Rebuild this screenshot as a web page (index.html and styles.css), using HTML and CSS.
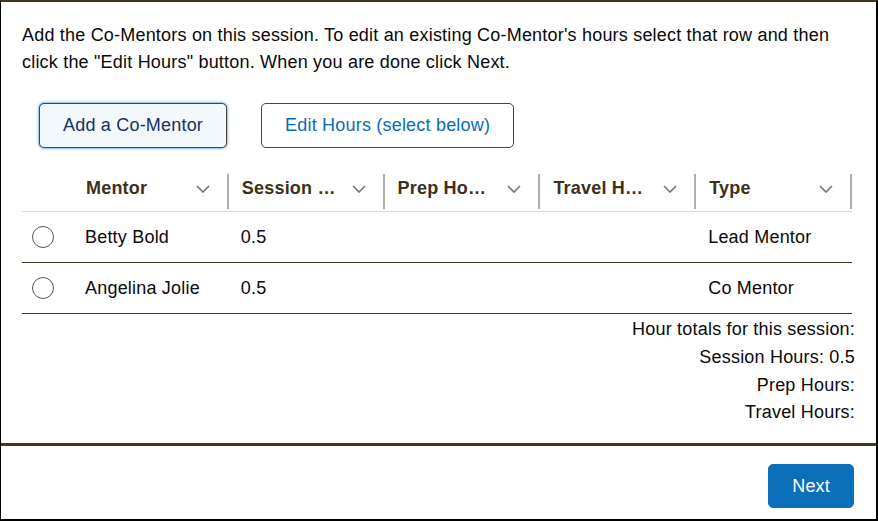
FILE: index.html
```html
<!DOCTYPE html>
<html lang="en">
<head>
<meta charset="utf-8">
<title>Co-Mentors</title>
<link rel="stylesheet" href="styles.css">
</head>
<body>
<div class="frame">
  <section class="panel">
    <p class="intro">Add the Co-Mentors on this session. To edit an existing Co-Mentor's hours select that row and then click the "Edit Hours" button. When you are done click Next.</p>
    <div class="actions">
      <button class="btn btn-focus" type="button">Add a Co-Mentor</button>
      <button class="btn btn-neutral" type="button">Edit Hours (select below)</button>
    </div>
    <div class="grid">
      <div class="row head">
        <div class="cell sel"></div>
        <div class="th"><div class="th-in"><span class="lbl">Mentor</span><svg class="chev" viewBox="0 0 14 8" width="14" height="8"><path d="M1 1 L7 7 L13 1" /></svg></div></div>
        <div class="th"><div class="th-in"><span class="lbl">Session …</span><svg class="chev" viewBox="0 0 14 8" width="14" height="8"><path d="M1 1 L7 7 L13 1" /></svg></div></div>
        <div class="th"><div class="th-in"><span class="lbl">Prep Ho…</span><svg class="chev" viewBox="0 0 14 8" width="14" height="8"><path d="M1 1 L7 7 L13 1" /></svg></div></div>
        <div class="th"><div class="th-in"><span class="lbl">Travel H…</span><svg class="chev" viewBox="0 0 14 8" width="14" height="8"><path d="M1 1 L7 7 L13 1" /></svg></div></div>
        <div class="th"><div class="th-in"><span class="lbl">Type</span><svg class="chev" viewBox="0 0 14 8" width="14" height="8"><path d="M1 1 L7 7 L13 1" /></svg></div></div>
      </div>
      <div class="row data">
        <div class="cell sel"><span class="radio"></span></div>
        <div class="cell">Betty Bold</div>
        <div class="cell">0.5</div>
        <div class="cell"></div>
        <div class="cell"></div>
        <div class="cell">Lead Mentor</div>
      </div>
      <div class="row data">
        <div class="cell sel"><span class="radio"></span></div>
        <div class="cell">Angelina Jolie</div>
        <div class="cell">0.5</div>
        <div class="cell"></div>
        <div class="cell"></div>
        <div class="cell">Co Mentor</div>
      </div>
    </div>
    <div class="totals">
      <div>Hour totals for this session:</div>
      <div>Session Hours: 0.5</div>
      <div>Prep Hours:</div>
      <div>Travel Hours:</div>
    </div>
  </section>
  <footer class="footer">
    <button class="btn btn-brand" type="button">Next</button>
  </footer>
</div>
</body>
</html>
```

FILE: styles.css
```css
* { box-sizing: border-box; }
html, body { margin: 0; padding: 0; background: #fff; }
body {
  font-family: "Liberation Sans", Arial, sans-serif;
  font-size: 18px;
  letter-spacing: 0.2px;
  color: #0a0a0a;
}
.frame {
  width: 878px;
  height: 521px;
  display: flex;
  flex-direction: column;
  border-top: 2px solid #3d3320;
  border-left: 1px solid #000;
  border-right: 2px solid #000;
  border-bottom: 2px solid #000;
}
.panel {
  height: 444px;
  flex: none;
  padding: 20px 21px 0 21px;
  border-bottom: 3px solid #45391d;
}
.intro {
  margin: 0;
  line-height: 27px;
  padding-right: 4px;
}
.actions {
  display: flex;
  gap: 34px;
  margin: 27px 0 0 17px;
}
.btn {
  font-family: inherit;
  font-size: 18px;
  letter-spacing: 0.2px;
  height: 45px;
  padding: 0 23px;
  border-radius: 5px;
  border: 1px solid #4b4335;
  background: #fff;
  cursor: pointer;
}
.btn-focus {
  background: #f3f8fc;
  color: #16325c;
  box-shadow: 0 0 3px #0070d2;
}
.btn-neutral {
  color: #0a6bb8;
}
.grid {
  width: 830px;
  margin-top: 18px;
}
.row {
  display: grid;
  grid-template-columns: 51px repeat(5, 1fr);
}
.head {
  height: 46px;
  border-bottom: 1px solid #dcdad8;
}
.th {
  padding-top: 8px;
  padding-bottom: 2px;
}
.th-in {
  height: 35px;
  border-right: 2px solid #b0adab;
  display: flex;
  align-items: center;
  justify-content: space-between;
  padding: 0 17px 6px 13px;
  font-weight: bold;
  color: #3d311a;
}
.lbl { white-space: nowrap; }
.chev {
  flex: none;
  fill: none;
  stroke: #737373;
  stroke-width: 1.6;
}
.data {
  height: 51px;
  border-bottom: 1px solid #3e3520;
}
.cell {
  display: flex;
  align-items: center;
  padding-left: 12px;
  white-space: nowrap;
}
.cell.sel { padding-left: 10px; }
.radio {
  width: 22px;
  height: 22px;
  border-radius: 50%;
  border: 1.5px solid #5e5646;
  background: #fff;
}
.totals {
  margin-top: 2px;
  text-align: right;
  line-height: 27.75px;
}
.footer {
  flex: 1;
  display: flex;
  justify-content: flex-end;
  align-items: flex-start;
  padding: 18px 22px 0 0;
}
.btn-brand {
  height: 44px;
  padding: 0 23px;
  background: #0b6fba;
  border: 1px solid #0b6fba;
  color: #fff;
}
```
